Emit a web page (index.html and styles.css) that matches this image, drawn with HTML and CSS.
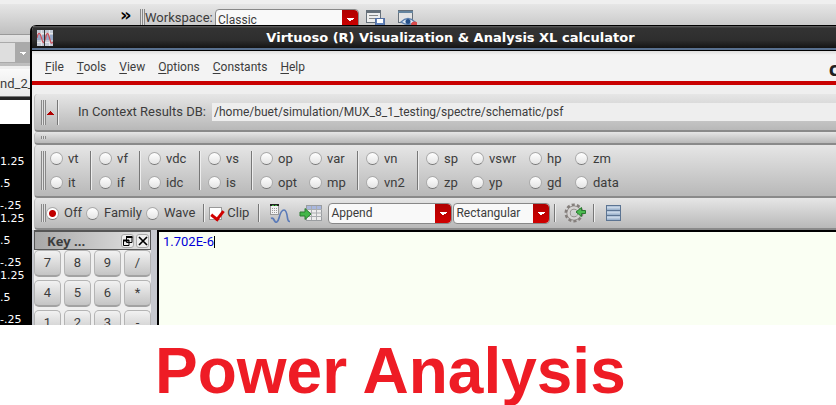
FILE: index.html
```html
<!DOCTYPE html>
<html lang="en">
<head>
<meta charset="utf-8">
<title>Power Analysis</title>
<link rel="stylesheet" href="styles.css">
</head>
<body>
<main class="desktop">
  <section class="backdrop" aria-label="Simulation window">
    <div class="workspace-bar">
      <span class="more">»</span>
      <span class="grip"></span>
      <label for="workspace">Workspace:</label>
      <span class="combo combo-workspace"><select id="workspace"><option>Classic</option></select></span>
      <svg class="icon-save" viewBox="0 0 20 18" width="20" height="18">
        <rect x="1.5" y="1.5" width="14" height="12" fill="#eee" stroke="#66707a"/>
        <path d="M1 3h15" stroke="#66707a" stroke-width="2"/>
        <path d="M4 6.500h9M4 9.500h9" stroke="#888"/>
        <rect x="10.500" y="9.500" width="9" height="9" fill="#5f80b8" stroke="#5571a4"/>
        <rect x="12" y="10" width="6" height="4" fill="#fff"/>
      </svg>
      <svg class="icon-view" viewBox="0 0 20 18" width="20" height="18">
        <rect x="1.500" y="1.500" width="14" height="12" fill="#e4e4e4" stroke="#66707a"/>
        <path d="M1 3h15" stroke="#66859f" stroke-width="2"/>
        <path d="M4 13q7-7 14 0q-7 5-14 0z" fill="#dfe9f5" stroke="#5b7fae" stroke-width="1.300"/>
        <circle cx="11" cy="12.500" r="2.500" fill="#24508a"/>
        <circle cx="17.500" cy="16" r="3.500" fill="#d94a4a"/>
      </svg>
    </div>
    <div class="side-bar"><span class="side-combo"></span></div>
    <div class="tab">nd_2_</div>
    <div class="plot-head"></div>
    <ol class="axis">
      <li>1.25</li><li>.5</li><li class="near">-.25</li>
      <li>1.25</li><li>.5</li><li class="near">-.25</li>
      <li>1.25</li><li>.5</li><li class="near">-.25</li>
    </ol>
  </section>

  <section class="calculator" aria-label="Calculator">
    <header class="titlebar">
      <svg viewBox="0 0 16 16" width="16" height="16">
        <rect width="16" height="16" fill="#c4cad6"/>
        <rect y="5" width="16" height="5" fill="#98a9c8"/>
        <path d="M4.500 0v16M12.500 0v16M0 3.500h16M0 12.500h16" stroke="#e6e6ea"/>
        <path d="M0 8C1 2 3 2 4.500 8s2.500 6 4 0 2.500-6 4 0 2 6 3.500 4" fill="none" stroke="#c8535e" stroke-width="1.300"/>
        <path d="M7.500 0v16" stroke="#333"/>
      </svg>
      <h1>Virtuoso (R) Visualization &amp; Analysis XL calculator</h1>
    </header>
    <nav class="menu">
      <a href="#"><u>F</u>ile</a><a href="#"><u>T</u>ools</a><a href="#"><u>V</u>iew</a><a href="#"><u>O</u>ptions</a><a href="#"><u>C</u>onstants</a><a href="#"><u>H</u>elp</a>
      <span class="brand">c</span>
    </nav>

    <div class="bars">
      <div class="bar bar-context">
        <span class="grip"></span>
        <button class="collapse" aria-label="Collapse"></button>
        <span class="sep"></span>
        <label for="db">In Context Results DB:</label>
        <input id="db" class="path" type="text" value="/home/buet/simulation/MUX_8_1_testing/spectre/schematic/psf">
      </div>
      <div class="bar bar-thin"><span class="dots"></span></div>
      <div class="bar bar-functions">
        <span class="grip"></span>
        <div class="group narrow"><label><input type="radio" name="fn">vt</label><label><input type="radio" name="fn">it</label></div>
        <span class="sep"></span>
        <div class="group small"><label><input type="radio" name="fn">vf</label><label><input type="radio" name="fn">if</label></div>
        <span class="sep"></span>
        <div class="group medium"><label><input type="radio" name="fn">vdc</label><label><input type="radio" name="fn">idc</label></div>
        <span class="sep"></span>
        <div class="group compact"><label><input type="radio" name="fn">vs</label><label><input type="radio" name="fn">is</label></div>
        <span class="sep"></span>
        <div class="group pair"><label><input type="radio" name="fn">op</label><label><input type="radio" name="fn">opt</label><label><input type="radio" name="fn">var</label><label><input type="radio" name="fn">mp</label></div>
        <span class="sep"></span>
        <div class="group medium"><label><input type="radio" name="fn">vn</label><label><input type="radio" name="fn">vn2</label></div>
        <span class="sep"></span>
        <div class="group quad"><label><input type="radio" name="fn">sp</label><label><input type="radio" name="fn">zp</label><label><input type="radio" name="fn">vswr</label><label><input type="radio" name="fn">yp</label><label><input type="radio" name="fn">hp</label><label><input type="radio" name="fn">gd</label><label><input type="radio" name="fn">zm</label><label><input type="radio" name="fn">data</label></div>
      </div>
      <div class="bar bar-select">
        <span class="grip"></span>
        <div class="modes">
          <label><input type="radio" name="mode" checked>Off</label>
          <label><input type="radio" name="mode">Family</label>
          <label><input type="radio" name="mode">Wave</label>
        </div>
        <span class="sep"></span>
        <label class="clip"><input type="checkbox" checked>Clip</label>
        <span class="sep"></span>
        <button class="tool tool-plot" aria-label="Plot">
          <svg viewBox="0 0 22 21" width="22" height="21">
            <rect x="1.500" y="1.500" width="8" height="10" fill="#f2f2f2" stroke="#999"/>
            <path d="M1 2h9" stroke="#222" stroke-width="2"/><path d="M3 2.500h2M6 2.500h2" stroke="#3bb03b"/>
            <path d="M3 5.500h6M3 7.500h6M3 9.500h6" stroke="#999" stroke-dasharray="1 1"/>
            <path d="M2 15.500C4 14 5 17 6 18.500S9 19 10 15 13 7 15 7s3 4 3.500 8 1.500 3.500 2.500 3.500" fill="none" stroke="#5b7bb8" stroke-width="1.700"/>
          </svg>
        </button>
        <button class="tool tool-table" aria-label="Send to table">
          <svg viewBox="0 0 24 19" width="24" height="19">
            <rect x="7.500" y="1.500" width="15" height="15" fill="#ececec" stroke="#9a9da0"/>
            <path d="M8 3.500h14" stroke="#a9b7dd" stroke-width="3"/>
            <path d="M7 5.500h16M7 9h16M7 12.500h16M12.500 2v14M17.500 2v14" stroke="#aaadb0"/>
            <path d="M1 8h5V4.500l6 5.500-6 5.500V12H1z" fill="#43b649" stroke="#2b7a31"/>
          </svg>
        </button>
        <span class="combo combo-append"><select aria-label="Mode"><option>Append</option></select></span>
        <span class="combo combo-rect"><select aria-label="Plot type"><option>Rectangular</option></select></span>
        <span class="sep"></span>
        <button class="tool tool-gear" aria-label="Settings">
          <svg viewBox="0 0 22 20" width="22" height="20">
            <circle cx="10" cy="10" r="8" fill="none" stroke="#857f7c" stroke-width="3" stroke-dasharray="3 2.030"/>
            <circle cx="10" cy="10" r="5.500" fill="none" stroke="#857f7c" stroke-width="4"/>
            <circle cx="10" cy="10" r="5.500" fill="none" stroke="#d5d3d2" stroke-width="2.600"/>
            <path d="M21.500 7.500h-4V4.500L12 9l5.500 4.500V10.500h4z" fill="#4cba50" stroke="#2b7a31"/>
          </svg>
        </button>
        <span class="sep"></span>
        <button class="tool tool-stack" aria-label="Stack">
          <svg viewBox="0 0 17 18" width="17" height="18">
            <rect x="1.500" y="1.500" width="14" height="15" fill="#9fb5ce" stroke="#5c7492"/>
            <path d="M2 3.500h13M2 8.500h13M2 13.500h13" stroke="#c8d6e6" stroke-width="2"/>
            <path d="M1 6.500h15M1 11.500h15" stroke="#5c7492"/>
          </svg>
        </button>
      </div>
    </div>

    <div class="work">
      <aside class="dock">
        <div class="dock-title">
          <h2>Key ...</h2>
          <button aria-label="Float"><svg viewBox="0 0 10 10" width="10" height="10"><path d="M3.500 1v5.500h5.500V1M.5 4v5.500h5.500V4" fill="none" stroke="#000"/><path d="M3 1h6.500M0 4.500h6" stroke="#000" stroke-width="2"/></svg></button>
          <button aria-label="Close"><svg viewBox="0 0 10 10" width="10" height="10"><path d="M1 1l8 8M9 1l-8 8" stroke="#000" stroke-width="1.700"/></svg></button>
        </div>
        <div class="keys">
          <button>7</button><button>8</button><button>9</button><button>/</button>
          <button>4</button><button>5</button><button>6</button><button>*</button>
          <button>1</button><button>2</button><button>3</button><button>-</button>
        </div>
      </aside>
      <div class="buffer" role="textbox" tabindex="0" aria-label="Buffer">1.702E-6<span class="caret"></span></div>
    </div>
  </section>
</main>
<h2 class="caption">Power Analysis</h2>
</body>
</html>
```
FILE: styles.css
```css
* { box-sizing: border-box; }

body {
  margin: 0;
  height: 100vh;
  display: flex;
  flex-direction: column;
  overflow: hidden;
  background: #fff;
  color: #3c3c3c;
  font: 13px/16px Roboto, "Liberation Sans", sans-serif;
}

button, input, select { font: inherit; color: inherit; margin: 0; padding: 0; }
button { border: 0; background: none; }
svg { display: block; }

.desktop { position: relative; flex: 1; min-height: 0; overflow: hidden; background: #000; }

.caption {
  margin: 0;
  height: 80px;
  padding: 10px 0 0 155px;
  color: #ee1c25;
  font: bold 64px/72px "Liberation Sans", Arial, sans-serif;
  white-space: nowrap;
}

/* Window behind the calculator */
.backdrop { background: #000; }

.workspace-bar {
  display: flex;
  align-items: flex-start;
  height: 34px;
  padding: 5px 0 0 120px;
  border-top: 4px solid #efefef;
  background: linear-gradient(#e6e6e6, #c0c0c0);
}
.workspace-bar .more { width: 20px; color: #000; font: bold 18px/12px "DejaVu Sans", sans-serif; }
.workspace-bar .grip { height: 20px; }
.workspace-bar label { width: 70px; padding-top: 1px; }
.icon-save { margin-left: 6px; }
.icon-view { margin-left: 12px; }

.side-bar { height: 32px; padding-top: 7px; background: linear-gradient(#e4e4e4, #bdbdbd); border-top: 1px solid #999; }
.side-combo {
  display: block;
  width: 30px;
  height: 21px;
  border: 1px solid #aaa;
  border-left: 0;
  background:
    linear-gradient(135deg, #fff 50%, transparent 50%) 23px 9px / 3px 3px no-repeat,
    linear-gradient(225deg, #fff 50%, transparent 50%) 20px 9px / 3px 3px no-repeat,
    linear-gradient(90deg, #dedede 15px, #aaa 15px);
}
.tab {
  height: 31px;
  padding-top: 7px;
  border-top: 3px solid #efefef;
  border-bottom: 1px solid #777;
  background: linear-gradient(#fafafa, #e8e8e8);
}
.plot-head { height: 27px; border-top: 3px solid #222; background: #fff; }
.axis {
  margin: 29px 0 0;
  padding: 0;
  list-style: none;
  color: #fff;
  font: 11px/13px "DejaVu Sans", sans-serif;
}
.axis li { height: 22px; padding-top: 2px; }
.axis .near { height: 13px; }

/* Calculator window */
.calculator {
  position: absolute;
  inset: 25px 0 0 30px;
  display: flex;
  flex-direction: column;
  border-left: 2px solid #000;
  border-radius: 6px 0 0 0;
  background: #efefef;
  overflow: hidden;
}

.titlebar {
  display: flex;
  align-items: center;
  height: 26px;
  padding-left: 5px;
  border-top: 1px solid #000;
  border-bottom: 1px solid #000;
  background: linear-gradient(#666, #333 2px, #2e2e2e 14px, #141414 22px, #58708f 22px);
}
.titlebar h1 {
  flex: 1;
  margin: 0;
  padding-left: 12px;
  color: #fff;
  text-align: center;
  font: bold 13px/18px "DejaVu Sans", sans-serif;
}

.menu {
  display: flex;
  gap: 13px;
  height: 34px;
  padding: 8px 0 0 13px;
  border-bottom: 4px solid #c90000;
  background: linear-gradient(#ddd, #f3f3f3 4px);
  font-size: 12px;
}
.menu a { color: inherit; text-decoration: none; }
.menu u { text-underline-offset: 2px; }
.brand { margin-left: auto; margin-right: -3px; color: #222; font: bold 20px/20px "Open Sans", sans-serif; }

.bars { padding: 9px 0 0 2px; }
.bar {
  display: flex;
  align-items: center;
  border-bottom: 2px solid #8a8a8a;
  border-left: 1px solid #bbb;
  border-radius: 4px 0 0 4px;
  background: linear-gradient(#e6e6e6, #b8b8b8);
}
.grip {
  flex: none;
  width: 5px;
  background: repeating-linear-gradient(90deg, #888 0 1px, #e0e0e0 1px 2px);
}
.sep { flex: none; width: 2px; border-left: 1px solid #777; border-right: 1px solid #eee; }

.bar-context { height: 38px; padding-left: 6px; }
.bar-context .grip, .bar-context .sep { height: 25px; }
.collapse {
  width: 11px;
  height: 25px;
  background:
    linear-gradient(315deg, #b00000 50%, transparent 50%) 1px 11px / 4px 4px no-repeat,
    linear-gradient(45deg, #b00000 50%, transparent 50%) 5px 11px / 4px 4px no-repeat;
}
.bar-context label { width: 134px; margin-left: 19px; }
.path { flex: 1; min-width: 0; height: 18px; padding-left: 2px; border: 0; background: #eee; font-size: 12px; }

.bar-thin { height: 13px; padding-left: 6px; }
.dots { width: 5px; height: 3px; background: repeating-linear-gradient(90deg, #888 0 1px, #ddd 1px 2px); }

.bar-functions { height: 53px; padding-left: 6px; }
.bar-functions .grip, .bar-functions .sep { height: 39px; }
.group {
  display: grid;
  grid-template-rows: 24px 24px;
  grid-auto-flow: column;
  padding-left: 7px;
}
.narrow { width: 44px; padding-left: 4px; }
.small { width: 47px; }
.medium { width: 58px; }
.compact { width: 50px; }
.pair { width: 104px; grid-template-columns: 49px 1fr; }
.quad { grid-template-columns: 45px 58px 46px 50px; }

label { display: flex; align-items: center; white-space: nowrap; }
input[type="radio"] {
  appearance: none;
  flex: none;
  width: 13px;
  height: 13px;
  margin-right: 5px;
  border: 1px solid #aaa;
  border-bottom-color: #777;
  border-radius: 50%;
  background: linear-gradient(#fff, #e4e4e4);
}
input[type="radio"]:checked { background: radial-gradient(circle, #c00000 3px, #fff 4px); }
input[type="checkbox"] {
  appearance: none;
  width: 13px;
  height: 13px;
  margin-right: 5px;
  border: 1px solid #999;
  background: #fff;
}
input[type="checkbox"]:checked::before {
  content: "";
  display: block;
  width: 6px;
  height: 9px;
  margin-left: 3px;
  border: solid #d00000;
  border-width: 0 3px 3px 0;
  transform: rotate(38deg);
}

.bar-select { height: 32px; padding-left: 6px; }
.bar-select .grip, .bar-select .sep { height: 18px; }
.modes { display: flex; gap: 4px; margin-right: 8px; }
.clip { margin: 0 9px 0 4px; }
.tool-plot { margin-left: 9px; }
.tool-table { margin: 0 5px 0 8px; }
.tool-gear { margin: 0 7px 0 8px; }
.tool-stack { margin-left: 10px; }

.combo { position: relative; display: inline-flex; height: 21px; }
.combo select {
  appearance: none;
  width: 100%;
  padding-left: 2px;
  border: 1px solid #888;
  border-radius: 4px;
  background: #f9f9f9;
  font-size: 12px;
}
.combo::after {
  content: "";
  position: absolute;
  inset: 1px 1px 1px auto;
  width: 16px;
  border-radius: 0 4px 4px 0;
  background:
    linear-gradient(225deg, #fff 50%, transparent 50%) 4px 8px / 4px 4px no-repeat,
    linear-gradient(135deg, #fff 50%, transparent 50%) 8px 8px / 4px 4px no-repeat,
    linear-gradient(#b00000, #d00000);
  pointer-events: none;
}
.combo-workspace { width: 144px; }
.combo-append { width: 124px; margin-right: 1px; }
.combo-rect { width: 97px; margin-right: 4px; }

.work { display: flex; flex: 1; min-height: 0; padding-left: 2px; background: #c6c8ce; }
.dock { width: 117px; overflow: hidden; background: #efefef; }
.dock-title {
  display: flex;
  align-items: center;
  gap: 2px;
  height: 20px;
  padding: 0 1px 0 12px;
  border: 1px solid #555;
  border-top-width: 2px;
  background: linear-gradient(90deg, #a8a8a8, #e4e4e4);
}
.dock-title h2 { flex: 1; margin: 0; font: bold 13px/16px "Open Sans", sans-serif; }
.dock-title button {
  display: grid;
  place-items: center;
  width: 13px;
  height: 14px;
  border: 1px solid #aaa;
  border-radius: 3px;
  background: #eee;
}
.keys { display: grid; grid-template-columns: repeat(4, 27px); gap: 3px; }
.keys button {
  height: 27px;
  border: 1px solid #b4b4b4;
  border-bottom: 2px solid #a2a2a2;
  border-radius: 5px;
  background: linear-gradient(#f2f2f2, #c4c4c4);
}
.buffer {
  flex: 1;
  margin-left: 6px;
  padding: 2px 4px;
  border: solid #000;
  border-width: 2px 0 0 2px;
  background: #fafff3;
  color: #0000d8;
}
.caret { display: inline-block; width: 1px; height: 12px; background: #000; vertical-align: -2px; }
```
